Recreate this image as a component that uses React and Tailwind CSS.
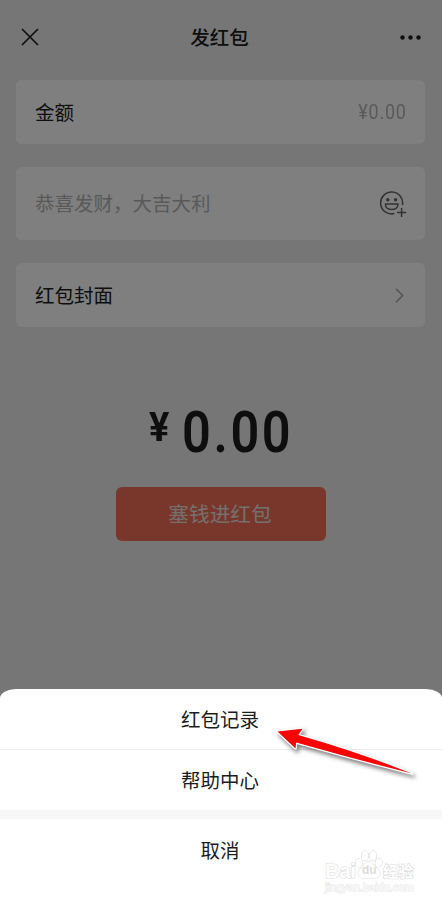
import React from 'react';

const CloseIcon = () => (
  <svg width="18" height="18" viewBox="0 0 18 18" fill="none" stroke="currentColor" strokeWidth="1.7">
    <path d="M1 1L17 17M17 1L1 17" />
  </svg>
);

const MoreIcon = () => (
  <svg width="21" height="5" viewBox="0 0 21 5" fill="currentColor">
    <circle cx="2.5" cy="2.5" r="2.2" />
    <circle cx="10.5" cy="2.5" r="2.2" />
    <circle cx="18.5" cy="2.5" r="2.2" />
  </svg>
);

const EmojiPlusIcon = () => (
  <svg width="28" height="27" viewBox="0 0 28 27" fill="none" stroke="currentColor" strokeWidth="1.5">
    <path d="M23.4 14.2A11 11 0 1 0 15.4 22.6" />
    <circle cx="8.8" cy="8.8" r="1.7" fill="currentColor" stroke="none" />
    <circle cx="16.6" cy="8.8" r="1.7" fill="currentColor" stroke="none" />
    <path d="M6.4 13H19C19 16.4 16.2 18.6 12.7 18.6S6.4 16.4 6.4 13Z" strokeLinejoin="round" />
    <path d="M22.6 17V26M18 21.5H27.2" />
  </svg>
);

const ChevronIcon = () => (
  <svg width="9" height="15" viewBox="0 0 9 15" fill="none" stroke="currentColor" strokeWidth="1.6">
    <path d="M1 0.8L7.6 7.5L1 14.2" />
  </svg>
);

const PointerArrow = () => (
  <svg width="150" height="60" viewBox="0 0 150 60" className="absolute left-[270px] top-[35px] drop-shadow-[2px_3px_2px_rgba(0,0,0,0.5)]">
    <path
      d="M7.5 7.5L32.5 4.8L28.3 11Q88 28 142 49.5Q84 35 26.2 18.5L25.5 24.500Z"
      fill="#f80404"
      stroke="#fff"
      strokeWidth="2.6"
      strokeLinejoin="round"
      paintOrder="stroke"
    />
  </svg>
);

const Watermark = () => (
  <div className="absolute bottom-[11px] left-[325px] w-[90px] text-white [paint-order:stroke_fill] [-webkit-text-stroke:1.2px_#dcdcdc]">
    <div className="flex h-[30px] items-end">
      <span className="w-[30px] font-['Liberation_Sans'] text-[20px] leading-[18px] font-bold">Bai</span>
      <div className="relative h-[30px] w-[28px]">
        <svg width="28" height="30" viewBox="0 0 28 30" fill="#fff" stroke="#d6d6d6" strokeWidth="1">
          <ellipse cx="4.2" cy="13" rx="3.4" ry="4.3" transform="rotate(-12 4.2 13)" />
          <ellipse cx="10" cy="5.6" rx="3.3" ry="4.7" />
          <ellipse cx="18" cy="5.6" rx="3.3" ry="4.7" />
          <ellipse cx="23.8" cy="12.6" rx="3.4" ry="4.3" transform="rotate(12 23.8 12.6)" />
          <path d="M14 11.5C10.5 11.5 9 15.5 5.5 18.5C1.5 22 3 28 7.5 28H20.5C25.5 28 26.5 22 22.5 18.5C19 15.5 17.5 11.5 14 11.5Z" />
        </svg>
        <span className="absolute top-[13px] left-[7px] font-['Liberation_Sans'] text-[12px] leading-[14px] font-bold text-[#dcdcdc] [-webkit-text-stroke:0px]">du</span>
      </div>
      <span className="text-[15.2px] leading-[16px] font-bold">经验</span>
    </div>
    <div className="font-['Liberation_Sans'] text-[11px] leading-[14px] whitespace-nowrap [-webkit-text-stroke:0.9px_#e2e2e2]">jingyan.baidu.com</div>
  </div>
);

const App = () => {
  return (
    <div className="relative flex h-[905px] w-[442px] flex-col overflow-hidden bg-[#ededed] font-['Roboto','Noto_Sans_CJK_SC',sans-serif] text-[#1c1c1c]">
      <header className="flex h-[74px] items-center justify-between pr-[21px] pl-[21px]">
        <CloseIcon />
        <h1 className="pt-1 text-[19.5px] font-medium">发红包</h1>
        <MoreIcon />
      </header>

      <main className="flex flex-col pt-[6px] pr-[17px] pl-4">
        <div className="flex h-16 items-center justify-between rounded-md bg-white pr-[18px] pl-[19px] text-[19.5px]">
          <span className="pt-[3px]">金额</span>
          <span className="origin-right scale-x-92 pt-[2px] tracking-[0.9px] text-[#b4b4b4]">¥0.00</span>
        </div>
        <div className="mt-[23px] flex h-[73px] items-center justify-between rounded-md bg-white pr-[18px] pl-[19px] text-[19.5px]">
          <span className="pt-[3px] text-[#b2b2b2]">恭喜发财，大吉大利</span>
          <span className="pt-[2px] text-[#646464]"><EmojiPlusIcon /></span>
        </div>
        <div className="mt-[23px] flex h-16 items-center justify-between rounded-md bg-white pr-[21px] pl-[19px] text-[19.5px]">
          <span className="pt-[3px]">红包封面</span>
          <span className="text-[#a8a8a8]"><ChevronIcon /></span>
        </div>

        <div className="mt-[71px] flex h-[66px] items-start pl-[133px] font-bold">
          <span className="mt-[10px] w-[32.5px] text-[40px] leading-[40px]"><span className="inline-block origin-left scale-x-95">¥</span></span>
          <span className="origin-left scale-x-[0.87] text-[58px] leading-[69px] font-semibold tracking-[3px]">0.00</span>
        </div>
        <button className="mt-[23px] ml-[99.5px] h-[53.5px] w-[210px] rounded-md bg-[#f36d55] pt-1 pr-px text-[20.7px] text-[#e8e0de]">
          塞钱进红包
        </button>
      </main>

      <div className="absolute inset-0 flex flex-col justify-end bg-black/50">
        <div className="relative flex h-[216.5px] flex-col overflow-hidden rounded-t-[16px_9px] bg-white text-[19.5px]">
          <button className="h-[61.5px] border-b border-[#ececec] pt-1 pr-[2px]">红包记录</button>
          <button className="h-[60px] pt-[3px] pr-[2px]">帮助中心</button>
          <div className="h-[9px] bg-[#f7f7f7]" />
          <button className="h-[61px] pt-1 pr-[2px]">取消</button>
          <PointerArrow />
          <Watermark />
        </div>
      </div>
    </div>
  );
};

export default App;
